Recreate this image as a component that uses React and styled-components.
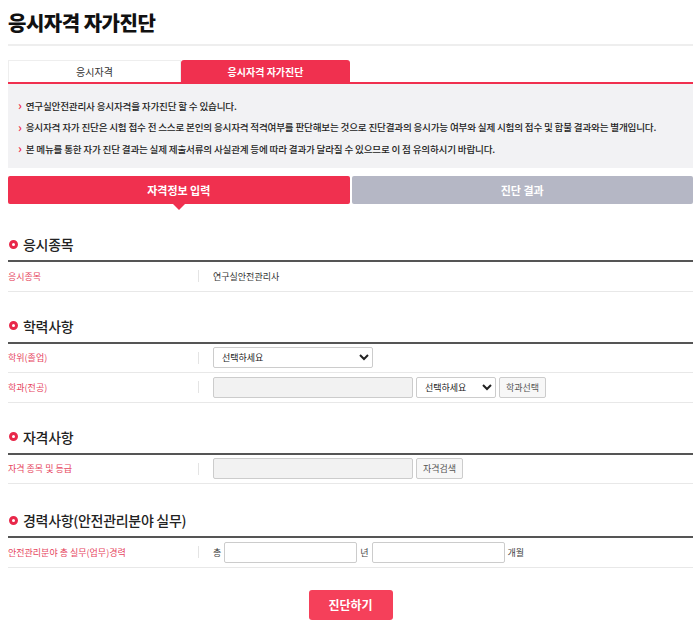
import styled, { createGlobalStyle, css } from "styled-components";

const GlobalStyle = createGlobalStyle`
  html, body { margin: 0; padding: 0; background: #fff; }
  body {
    font-family: "Noto Sans CJK KR", "Noto Sans", sans-serif;
    color: #222;
  }
  *, *::before, *::after { box-sizing: border-box; }
`;

const RED = "#f0304f";

const Page = styled.div`
  width: 700px;
  padding: 0 7px 0 8px;
`;

const Title = styled.h1`
  margin: 0;
  padding: 8px 0 0;
  height: 46px;
  font-size: 20px;
  font-weight: 900;
  letter-spacing: -0.5px;
  color: #111;
  border-bottom: 2px solid #eee;
`;

const Tabs = styled.div`
  display: flex;
  margin-top: 14px;
  border-bottom: 2px solid ${RED};
`;

const Tab = styled.div`
  width: ${(p) => p.$w}px;
  height: 22px;
  display: flex;
  align-items: center;
  justify-content: center;
  font-size: 10px;
  ${(p) =>
    p.$active
      ? css`
          background: ${RED};
          color: #fff;
          font-weight: 700;
          border-radius: 3px 3px 0 0;
        `
      : css`
          background: #fff;
          color: #333;
          border: 1px solid #eee;
          border-bottom: none;
        `}
`;

const Notice = styled.ul`
  margin: 0;
  list-style: none;
  background: #f2f2f4;
  padding: 11px 10px 10px 10px;
  height: 84px;
`;

const NoticeItem = styled.li`
  font-size: 9.6px;
  font-weight: 500;
  color: #222;
  height: 21.5px;
  display: flex;
  align-items: center;
  letter-spacing: -0.2px;
  &::before {
    content: "›";
    color: ${RED};
    font-weight: 700;
    font-size: 12px;
    margin-right: 4px;
    margin-top: -2px;
  }
`;

const Steps = styled.div`
  display: flex;
  gap: 2px;
  margin-top: 8px;
`;

const Step = styled.div`
  position: relative;
  flex: 1;
  height: 28px;
  display: flex;
  align-items: center;
  justify-content: center;
  font-size: 11px;
  font-weight: 700;
  color: #fff;
  border-radius: 2px;
  background: ${(p) => (p.$active ? RED : "#b5b7c5")};
  ${(p) =>
    p.$active &&
    css`
      &::after {
        content: "";
        position: absolute;
        left: 50%;
        bottom: -6px;
        margin-left: -6px;
        border-left: 6px solid transparent;
        border-right: 6px solid transparent;
        border-top: 6px solid ${RED};
      }
    `}
`;

const Section = styled.section`
  margin-top: ${(p) => p.$top}px;
`;

const SectionTitle = styled.h2`
  margin: 0;
  display: flex;
  align-items: center;
  gap: 5px;
  font-size: 14px;
  font-weight: 500;
  letter-spacing: -0.3px;
  color: #222;
  height: 27px;
  padding: 0 0 7px 1px;
  border-bottom: 2px solid #555;
  &::before {
    content: "";
    flex: none;
    width: 9px;
    height: 9px;
    border-radius: 50%;
    border: 3px solid #e8284a;
  }
`;

const Row = styled.div`
  display: flex;
  align-items: center;
  height: 29.5px;
  border-bottom: 1px solid #e8e8e8;
`;

const Label = styled.div`
  width: 191px;
  font-size: 9px;
  color: #e64560;
  position: relative;
  &::after {
    content: "";
    position: absolute;
    right: 0;
    top: 50%;
    margin-top: -6px;
    width: 1px;
    height: 12px;
    background: #e4e4e4;
  }
`;

const Field = styled.div`
  flex: 1;
  display: flex;
  align-items: center;
  gap: 3px;
  padding-left: 14px;
  font-size: 9px;
  color: #333;
`;

const Input = styled.input`
  width: ${(p) => p.$w}px;
  height: 21px;
  border: 1px solid #ccc;
  border-radius: 2px;
  background: ${(p) => (p.readOnly ? "#f2f2f2" : "#fff")};
  font-family: inherit;
  font-size: 9px;
  padding: 0 6px;
`;

const Select = styled.select`
  width: ${(p) => p.$w}px;
  height: 21px;
  border: 1px solid #ccc;
  border-radius: 2px;
  background: #fff;
  font-family: inherit;
  font-size: 9px;
  color: #222;
  padding: 0 4px;
`;

const SmallButton = styled.button`
  height: 21px;
  padding: 0 6px;
  border: 1px solid #ccc;
  border-radius: 2px;
  background: #f7f7f7;
  font-family: inherit;
  font-size: 9px;
  color: #555;
`;

const Unit = styled.span`
  font-size: 9px;
  color: #444;
`;

const Actions = styled.div`
  display: flex;
  justify-content: center;
  margin-top: 22px;
`;

const Submit = styled.button`
  width: 84px;
  height: 30px;
  border: none;
  border-radius: 3px;
  background: #f5405a;
  color: #fff;
  font-family: inherit;
  font-size: 12px;
  font-weight: 700;
`;

function SelectBox({ w }) {
  return (
    <Select $w={w} defaultValue="">
      <option value="">선택하세요</option>
    </Select>
  );
}

export default function App() {
  return (
    <>
      <GlobalStyle />
      <Page>
        <Title>응시자격 자가진단</Title>

        <Tabs>
          <Tab $w={173}>응시자격</Tab>
          <Tab $w={169} $active>
            응시자격 자가진단
          </Tab>
        </Tabs>

        <Notice>
          <NoticeItem>연구실안전관리사 응시자격을 자가진단 할 수 있습니다.</NoticeItem>
          <NoticeItem>
            응시자격 자가 진단은 시험 접수 전 스스로 본인의 응시자격 적격여부를 판단해보는 것으로 진단결과의 응시가능 여부와 실제 시험의 접수 및 합불 결과와는 별개입니다.
          </NoticeItem>
          <NoticeItem>
            본 메뉴를 통한 자가 진단 결과는 실제 제출서류의 사실관계 등에 따라 결과가 달라질 수 있으므로 이 점 유의하시기 바랍니다.
          </NoticeItem>
        </Notice>

        <Steps>
          <Step $active>자격정보 입력</Step>
          <Step>진단 결과</Step>
        </Steps>

        <Section $top={31}>
          <SectionTitle>응시종목</SectionTitle>
          <Row>
            <Label>응시종목</Label>
            <Field>연구실안전관리사</Field>
          </Row>
        </Section>

        <Section $top={25}>
          <SectionTitle>학력사항</SectionTitle>
          <Row>
            <Label>학위(졸업)</Label>
            <Field>
              <SelectBox w={160} />
            </Field>
          </Row>
          <Row>
            <Label>학과(전공)</Label>
            <Field>
              <Input $w={200} readOnly />
              <SelectBox w={80} />
              <SmallButton>학과선택</SmallButton>
            </Field>
          </Row>
        </Section>

        <Section $top={25}>
          <SectionTitle>자격사항</SectionTitle>
          <Row>
            <Label>자격 종목 및 등급</Label>
            <Field>
              <Input $w={200} readOnly />
              <SmallButton>자격검색</SmallButton>
            </Field>
          </Row>
        </Section>

        <Section $top={27}>
          <SectionTitle>경력사항(안전관리분야 실무)</SectionTitle>
          <Row>
            <Label>안전관리분야 총 실무(업무)경력</Label>
            <Field>
              <Unit>총</Unit>
              <Input $w={133} />
              <Unit>년</Unit>
              <Input $w={133} />
              <Unit>개월</Unit>
            </Field>
          </Row>
        </Section>

        <Actions>
          <Submit>진단하기</Submit>
        </Actions>
      </Page>
    </>
  );
}
